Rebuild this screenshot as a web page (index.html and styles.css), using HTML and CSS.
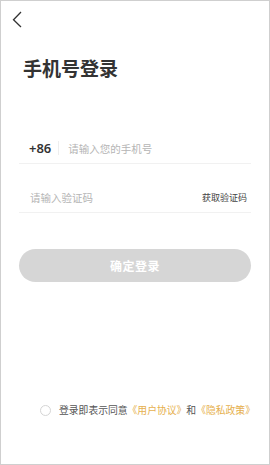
FILE: index.html
```html
<!DOCTYPE html>
<html lang="zh-CN">
<head>
    <meta charset="UTF-8">
    <meta name="viewport" content="width=device-width, initial-scale=1.0">
    <title>手机号登录</title>
    <link rel="stylesheet" href="styles.css">
</head>
<body>
    <div class="screen">
        <div class="nav">
            <svg class="back" width="12" height="18" viewBox="0 0 12 18">
                <polyline points="9,1 1.5,8.7 9,16" fill="none" stroke="#333" stroke-width="1.3"/>
            </svg>
        </div>

        <h1 class="title">手机号登录</h1>

        <div class="form">
            <div class="row">
                <span class="code">+86</span>
                <span class="divider"></span>
                <span class="placeholder">请输入您的手机号</span>
            </div>
            <div class="row row-code">
                <span class="placeholder">请输入验证码</span>
                <span class="get-code">获取验证码</span>
            </div>
            <button class="submit">确定登录</button>
        </div>

        <div class="agree">
            <span class="radio"></span>
            <span class="agree-text">登录即表示同意<a class="link">《用户协议》</a>和<a class="link">《隐私政策》</a></span>
        </div>
    </div>
</body>
</html>
```

FILE: styles.css
```css
body {
    margin: 0;
    padding: 0;
    font-family: "Noto Sans CJK SC", "Noto Sans", sans-serif;
    background-color: #fff;
}

.screen {
    width: 270px;
    height: 465px;
    box-sizing: border-box;
    border: 1px solid #cfcfcf;
    display: flex;
    flex-direction: column;
}

.nav {
    height: 40px;
    padding-left: 11px;
    padding-top: 10px;
    box-sizing: border-box;
}

.back {
    display: block;
}

.title {
    margin: 14px 0 0 22px;
    font-size: 19px;
    line-height: 26px;
    font-weight: bold;
    color: #333;
}

.form {
    margin-top: 52px;
    padding: 0 18px;
}

.row {
    height: 30px;
    display: flex;
    align-items: center;
    border-bottom: 1px solid #f1f1f1;
    padding: 0 4px 0 10px;
}

.row-code {
    margin-top: 18px;
    padding-left: 11px;
    justify-content: space-between;
}

.code {
    font-family: "Noto Sans", sans-serif;
    font-size: 13px;
    font-weight: 600;
    color: #333;
}

.divider {
    width: 1px;
    height: 14px;
    background-color: #eee;
    margin: 0 9px 0 7px;
}

.placeholder {
    font-size: 10.5px;
    color: #b5b5b5;
}

.get-code {
    font-size: 9px;
    color: #444;
}

.submit {
    display: block;
    width: 100%;
    height: 33px;
    margin-top: 36px;
    border: none;
    border-radius: 17px;
    background-color: #d6d6d6;
    color: #fff;
    font-family: inherit;
    font-size: 12px;
    font-weight: bold;
    letter-spacing: 0.5px;
}

.agree {
    margin-top: auto;
    margin-bottom: 47px;
    padding-left: 39px;
    display: flex;
    align-items: center;
    height: 14px;
}

.radio {
    width: 9px;
    height: 9px;
    border: 1px solid #d5d5d5;
    border-radius: 50%;
    margin-right: 8px;
}

.agree-text {
    font-size: 9.8px;
    color: #555;
}

.link {
    color: #e6b04e;
}
```
